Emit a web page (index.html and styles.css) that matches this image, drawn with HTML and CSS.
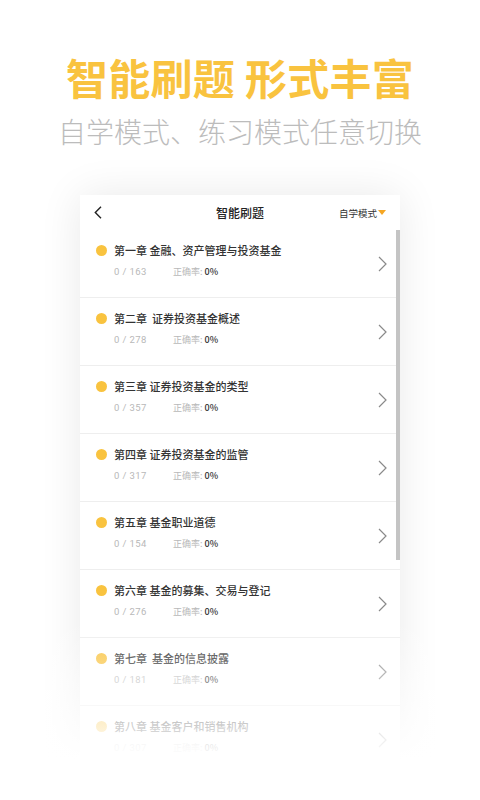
FILE: index.html
```html
<!DOCTYPE html>
<html lang="zh-CN">
<head>
<meta charset="utf-8">
<title>智能刷题</title>
<link rel="stylesheet" href="styles.css">
</head>
<body>
<div class="page">
  <div class="hero">
    <h1 class="hero-title">智能刷题 形式丰富</h1>
    <p class="hero-sub">自学模式、练习模式任意切换</p>
  </div>

  <div class="card">
    <div class="topbar">
      <div class="back">
        <svg width="8" height="13" viewBox="0 0 8 13"><path d="M7 0.8 L1.3 6.5 L7 12.2" fill="none" stroke="#222" stroke-width="1.4"/></svg>
      </div>
      <div class="topbar-title">智能刷题</div>
      <div class="mode">自学模式<span class="tri"></span></div>
    </div>

    <div class="list">
      <div class="item">
        <div class="info">
          <div class="name"><span class="dot"></span>第一章 金融、资产管理与投资基金</div>
          <div class="meta"><span class="count">0 / 163</span><span class="rate">正确率:</span><span class="pct">0%</span></div>
        </div>
        <svg class="chev" width="9" height="16" viewBox="0 0 9 16"><path d="M1 1 L8 8 L1 15" fill="none" stroke="#8a8a8a" stroke-width="1.2"/></svg>
      </div>
      <div class="item">
        <div class="info">
          <div class="name"><span class="dot"></span>第二章&nbsp;&nbsp;证券投资基金概述</div>
          <div class="meta"><span class="count">0 / 278</span><span class="rate">正确率:</span><span class="pct">0%</span></div>
        </div>
        <svg class="chev" width="9" height="16" viewBox="0 0 9 16"><path d="M1 1 L8 8 L1 15" fill="none" stroke="#8a8a8a" stroke-width="1.2"/></svg>
      </div>
      <div class="item">
        <div class="info">
          <div class="name"><span class="dot"></span>第三章 证券投资基金的类型</div>
          <div class="meta"><span class="count">0 / 357</span><span class="rate">正确率:</span><span class="pct">0%</span></div>
        </div>
        <svg class="chev" width="9" height="16" viewBox="0 0 9 16"><path d="M1 1 L8 8 L1 15" fill="none" stroke="#8a8a8a" stroke-width="1.2"/></svg>
      </div>
      <div class="item">
        <div class="info">
          <div class="name"><span class="dot"></span>第四章 证券投资基金的监管</div>
          <div class="meta"><span class="count">0 / 317</span><span class="rate">正确率:</span><span class="pct">0%</span></div>
        </div>
        <svg class="chev" width="9" height="16" viewBox="0 0 9 16"><path d="M1 1 L8 8 L1 15" fill="none" stroke="#8a8a8a" stroke-width="1.2"/></svg>
      </div>
      <div class="item">
        <div class="info">
          <div class="name"><span class="dot"></span>第五章 基金职业道德</div>
          <div class="meta"><span class="count">0 / 154</span><span class="rate">正确率:</span><span class="pct">0%</span></div>
        </div>
        <svg class="chev" width="9" height="16" viewBox="0 0 9 16"><path d="M1 1 L8 8 L1 15" fill="none" stroke="#8a8a8a" stroke-width="1.2"/></svg>
      </div>
      <div class="item">
        <div class="info">
          <div class="name"><span class="dot"></span>第六章 基金的募集、交易与登记</div>
          <div class="meta"><span class="count">0 / 276</span><span class="rate">正确率:</span><span class="pct">0%</span></div>
        </div>
        <svg class="chev" width="9" height="16" viewBox="0 0 9 16"><path d="M1 1 L8 8 L1 15" fill="none" stroke="#8a8a8a" stroke-width="1.2"/></svg>
      </div>
      <div class="item">
        <div class="info">
          <div class="name"><span class="dot"></span>第七章&nbsp;&nbsp;基金的信息披露</div>
          <div class="meta"><span class="count">0 / 181</span><span class="rate">正确率:</span><span class="pct">0%</span></div>
        </div>
        <svg class="chev" width="9" height="16" viewBox="0 0 9 16"><path d="M1 1 L8 8 L1 15" fill="none" stroke="#8a8a8a" stroke-width="1.2"/></svg>
      </div>
      <div class="item">
        <div class="info">
          <div class="name"><span class="dot"></span>第八章 基金客户和销售机构</div>
          <div class="meta"><span class="count">0 / 307</span><span class="rate">正确率:</span><span class="pct">0%</span></div>
        </div>
        <svg class="chev" width="9" height="16" viewBox="0 0 9 16"><path d="M1 1 L8 8 L1 15" fill="none" stroke="#8a8a8a" stroke-width="1.2"/></svg>
      </div>
    </div>
    <div class="scrollbar"></div>
  </div>
  <div class="fade"></div>
</div>
</body>
</html>
```

FILE: styles.css
```css
html, body {
  margin: 0;
  padding: 0;
  background: #ffffff;
}
body {
  font-family: "Noto Sans CJK SC", "Noto Sans", sans-serif;
  width: 480px;
  height: 800px;
  overflow: hidden;
}
.page {
  position: relative;
  width: 480px;
  height: 800px;
  overflow: hidden;
}
.hero {
  padding-top: 49px;
  text-align: center;
}
.hero-title {
  margin: 0;
  font-size: 42px;
  line-height: 56px;
  font-weight: 700;
  color: #f9c33f;
  letter-spacing: 0.3px;
}
.hero-sub {
  margin: 8px 0 0;
  font-size: 28px;
  line-height: 36px;
  font-weight: 300;
  color: #bcbcbc;
}
.card {
  position: relative;
  width: 320px;
  height: 580px;
  margin: 46px auto 0;
  background: #fff;
  box-shadow: 0 0 40px rgba(0, 0, 0, 0.09);
  overflow: hidden;
}
.topbar {
  height: 35px;
  display: grid;
  grid-template-columns: 1fr auto 1fr;
  align-items: center;
}
.back {
  padding-left: 14px;
  display: flex;
  align-items: center;
}
.topbar-title {
  font-size: 12px;
  font-weight: 500;
  color: #222;
}
.mode {
  justify-self: end;
  padding-right: 14px;
  font-size: 9.5px;
  color: #333;
  display: flex;
  align-items: center;
}
.tri {
  width: 0;
  height: 0;
  border-left: 4px solid transparent;
  border-right: 4px solid transparent;
  border-top: 5px solid #f5a623;
  margin-left: 1px;
}
.item {
  height: 68px;
  box-sizing: border-box;
  border-bottom: 1px solid #eeeeee;
  display: flex;
  align-items: center;
  padding: 0 13px 0 16px;
}
.info {
  flex: 1;
  align-self: flex-start;
  padding-top: 12px;
}
.name {
  height: 16px;
  line-height: 16px;
  font-size: 11px;
  font-weight: 500;
  color: #333;
  display: flex;
  align-items: center;
  white-space: pre;
}
.dot {
  width: 11px;
  height: 11px;
  border-radius: 50%;
  background: #f9c33f;
  margin-right: 7px;
  flex-shrink: 0;
}
.meta {
  margin-top: 7px;
  padding-left: 18px;
  height: 14px;
  line-height: 14px;
  font-size: 9px;
  display: flex;
}
.count {
  width: 59px;
  color: #b8b8b8;
  font-family: Roboto, "Noto Sans", sans-serif;
  font-size: 9.5px;
  letter-spacing: 0.4px;
}
.rate {
  color: #b8b8b8;
}
.pct {
  color: #333;
  margin-left: 2px;
  font-weight: 500;
}
.chev {
  flex-shrink: 0;
}
.scrollbar {
  position: absolute;
  right: 0;
  top: 35px;
  width: 4px;
  height: 330px;
  background: #c4c4c4;
}
.fade {
  position: absolute;
  left: 0;
  right: 0;
  top: 620px;
  height: 180px;
  background: linear-gradient(to bottom, rgba(255,255,255,0) 0px, rgba(255,255,255,1) 140px, #fff 180px);
}
```
